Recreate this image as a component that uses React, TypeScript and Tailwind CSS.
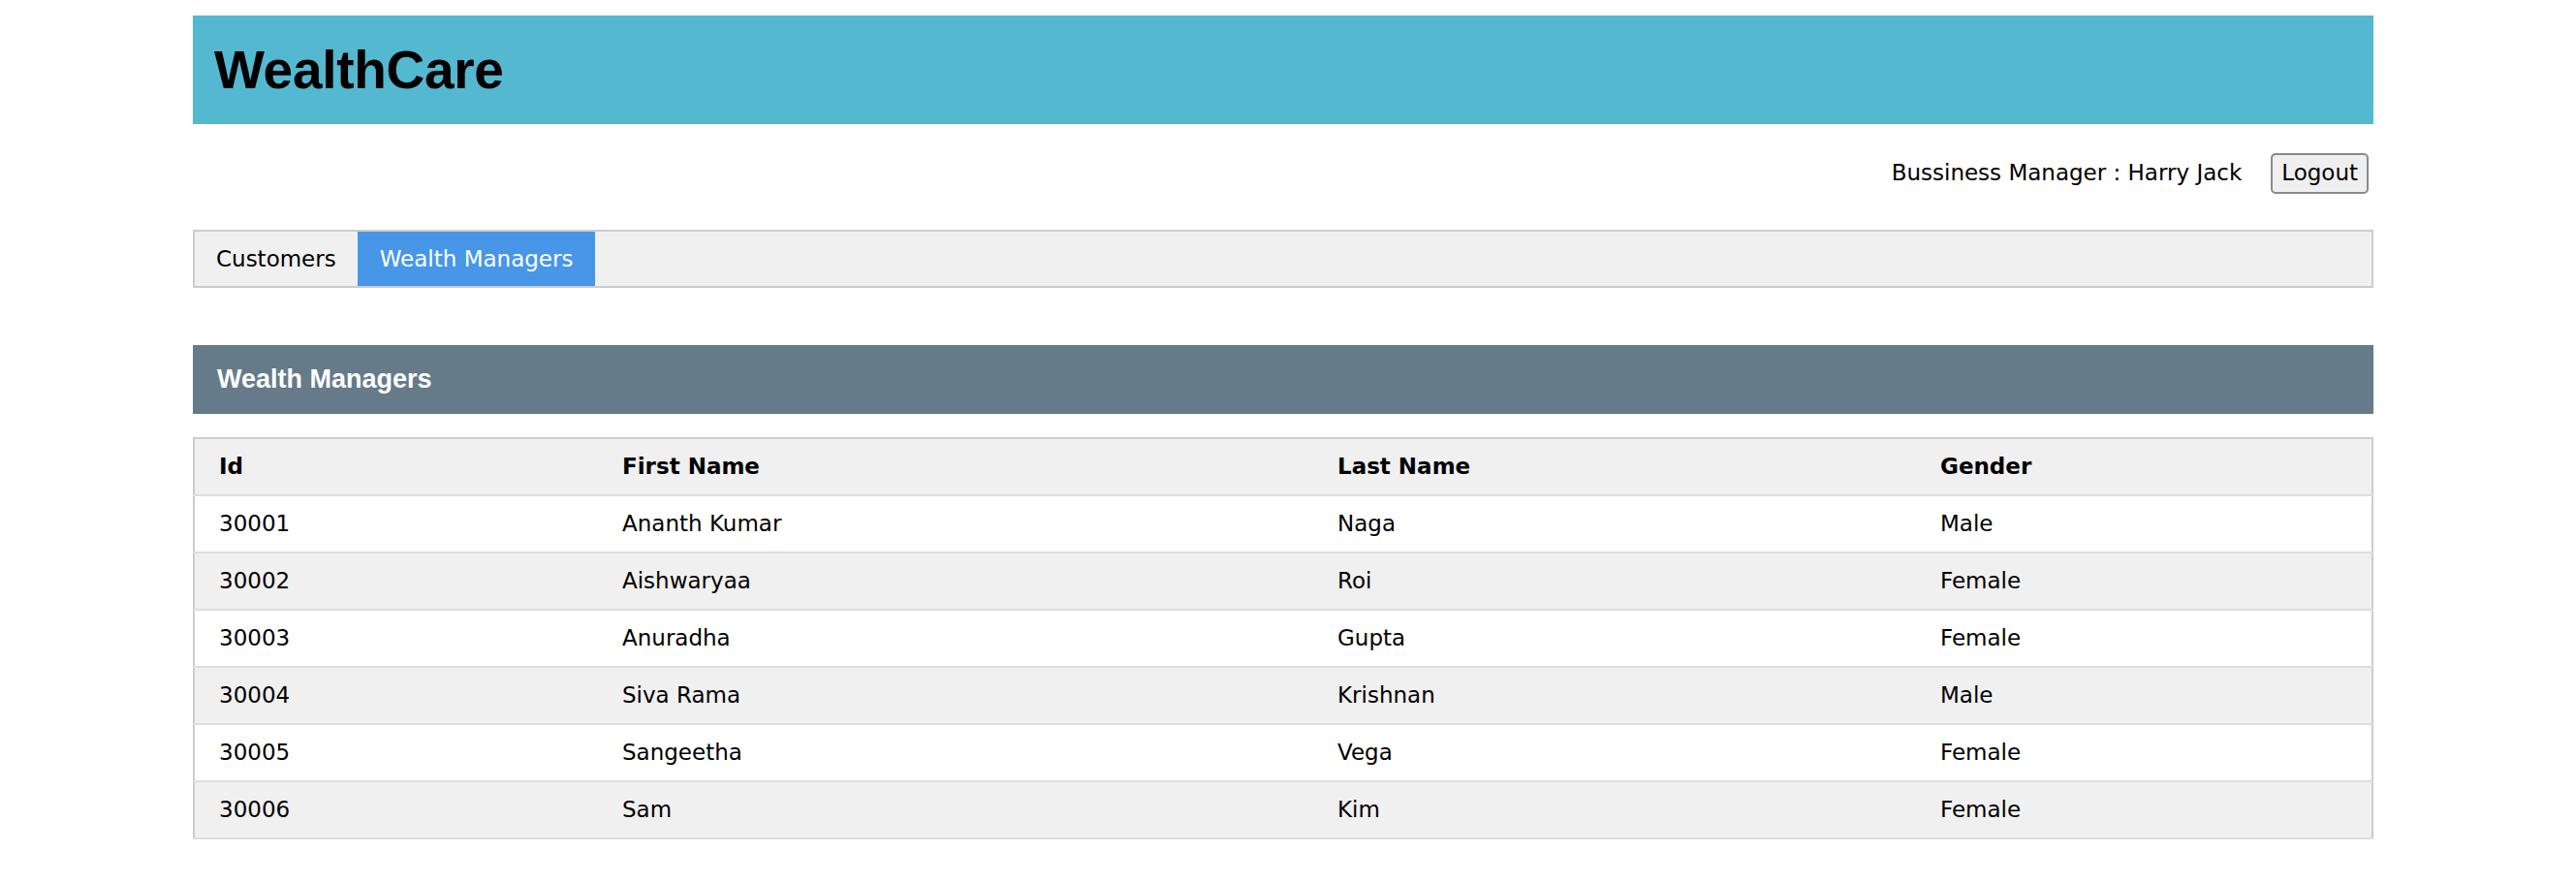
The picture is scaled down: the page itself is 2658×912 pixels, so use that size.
import React from "react";

export default function App() {
  // Wealth manager rows
  const managers = [
    { id: "30001", first: "Ananth Kumar", last: "Naga", gender: "Male" },
    { id: "30002", first: "Aishwaryaa", last: "Roi", gender: "Female" },
    { id: "30003", first: "Anuradha", last: "Gupta", gender: "Female" },
    { id: "30004", first: "Siva Rama", last: "Krishnan", gender: "Male" },
    { id: "30005", first: "Sangeetha", last: "Vega", gender: "Female" },
    { id: "30006", first: "Sam", last: "Kim", gender: "Female" },
  ];

  return (
    <div className="w-[2658px] min-h-[912px] bg-white font-['DejaVu_Sans',Verdana,sans-serif] text-[23px] text-black">
      <div className="ml-[199px] w-[2250px] pt-4">
        {/* Header */}
        <header className="h-[112px] bg-[#54b8d0] flex items-center pl-[22px]">
          <h1 className="font-['Liberation_Sans',Arial,sans-serif] font-bold text-[55px] leading-none tracking-[-0.3px]">
            WealthCare
          </h1>
        </header>

        {/* User line */}
        <div className="flex items-center justify-end h-[109px] pb-[8px] pr-[5px]">
          <span className="mr-[30px]">Bussiness Manager : Harry Jack</span>
          <button className="h-[42px] px-[9px] bg-[#efefef] border-2 border-[#8a8a8a] rounded-[5px] text-[23px] leading-none">
            Logout
          </button>
        </div>

        {/* Tabs */}
        <nav className="h-[60px] bg-[#f0f0f0] border-2 border-[#cccccc] flex items-stretch">
          <div className="px-[22px] flex items-center">Customers</div>
          <div className="px-[23px] flex items-center bg-[#4796e8] text-white">
            Wealth Managers
          </div>
        </nav>

        {/* Section title */}
        <div className="mt-[59px] h-[71px] bg-[#667b89] flex items-center pl-[25px]">
          <h3 className="font-['Liberation_Sans',Arial,sans-serif] font-bold text-[27px] text-white">
            Wealth Managers
          </h3>
        </div>

        {/* Table */}
        <table className="mt-[24px] w-full border-collapse border-2 border-[#cccccc] text-left">
          <thead>
            <tr className="bg-[#f0f0f0] border-b-2 border-[#dddddd]">
              <th className="w-[416px] h-[59px] pl-[25px] font-bold">Id</th>
              <th className="w-[738px] h-[59px] pl-[26px] font-bold">First Name</th>
              <th className="w-[622px] h-[59px] pl-[26px] font-bold">Last Name</th>
              <th className="h-[59px] pl-[26px] font-bold">Gender</th>
            </tr>
          </thead>
          <tbody>
            {managers.map((m, i) => (
              <tr
                key={m.id}
                className={
                  i % 2 === 0
                    ? "bg-white border-b-2 border-[#dddddd]"
                    : "bg-[#f0f0f0] border-b-2 border-[#dddddd]"
                }
              >
                <td className="h-[59px] pl-[25px]">{m.id}</td>
                <td className="h-[59px] pl-[26px]">{m.first}</td>
                <td className="h-[59px] pl-[26px]">{m.last}</td>
                <td className="h-[59px] pl-[26px]">{m.gender}</td>
              </tr>
            ))}
          </tbody>
        </table>
      </div>
    </div>
  );
}
